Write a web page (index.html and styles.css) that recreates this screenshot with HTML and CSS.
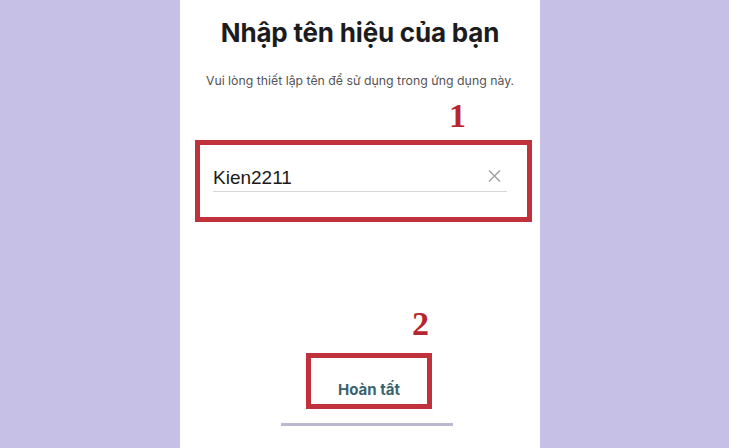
FILE: index.html
```html
<!DOCTYPE html>
<html lang="vi">
<head>
<meta charset="utf-8">
<title>Nhập tên hiệu của bạn</title>
<link rel="stylesheet" href="styles.css">
</head>
<body>
<div class="panel">
  <h1 class="title">Nhập tên hiệu của bạn</h1>
  <p class="subtitle">Vui lòng thiết lập tên để sử dụng trong ứng dụng này.</p>
  <div class="mark-box field-box">
    <div class="field">
      <span class="field-text">Kien2211</span>
      <svg class="clear" width="13" height="12" viewBox="0 0 13 12"><path d="M1 0.5 L12 11.5 M12 0.5 L1 11.5" stroke="#9a9a9a" stroke-width="1.2" fill="none"/></svg>
    </div>
  </div>
  <div class="spacer"></div>
  <div class="mark-box btn-box">
    <span class="btn-text">Hoàn tất</span>
  </div>
  <div class="home-bar"></div>
  <span class="num num-1">1</span>
  <span class="num num-2">2</span>
</div>
</body>
</html>
```

FILE: styles.css
```css
html, body {
  margin: 0;
  padding: 0;
}
body {
  background: #c6bfe6;
  width: 729px;
  height: 448px;
  overflow: hidden;
  padding-left: 180px;
  box-sizing: border-box;
  font-family: Inter, "Liberation Sans", sans-serif;
}
.panel {
  position: relative;
  width: 360px;
  height: 448px;
  background: #ffffff;
  display: flex;
  flex-direction: column;
}
.title {
  margin: 17px 0 0;
  font-size: 26px;
  line-height: 32px;
  font-weight: 700;
  color: #1c1c1e;
  text-align: center;
  letter-spacing: -0.2px;
}
.subtitle {
  margin: 24px 0 0;
  font-size: 12.3px;
  line-height: 16px;
  color: #555;
  text-align: center;
}
.mark-box {
  border: 5px solid #c1313b;
  box-sizing: border-box;
}
.field-box {
  margin: 51px 0 0 15px;
  width: 337px;
  height: 82px;
  padding: 17px 20px 0 13px;
}
.field {
  display: flex;
  align-items: center;
  justify-content: space-between;
  border-bottom: 1.5px solid #d6d6d6;
  height: 29px;
}
.field-text {
  font-family: "Liberation Sans", Arial, sans-serif;
  font-size: 19px;
  color: #1a1a1a;
  padding-top: 2px;
}
.clear {
  margin-right: 6px;
  margin-bottom: 2px;
}
.spacer {
  height: 131px;
}
.btn-box {
  margin-left: 126px;
  width: 126px;
  height: 56px;
  display: flex;
  align-items: center;
  justify-content: center;
  padding-top: 17px;
}
.btn-text {
  font-size: 15px;
  font-weight: 700;
  color: #3a6370;
}
.home-bar {
  margin: 14px 0 0 101px;
  width: 172px;
  height: 3px;
  background: #bcb8cf;
}
.num {
  position: absolute;
  font-family: "Liberation Serif", "Times New Roman", serif;
  font-weight: 700;
  font-size: 34px;
  line-height: 34px;
  color: #b72630;
}
.num-1 {
  left: 269px;
  top: 99px;
}
.num-2 {
  left: 232px;
  top: 307px;
}
```
